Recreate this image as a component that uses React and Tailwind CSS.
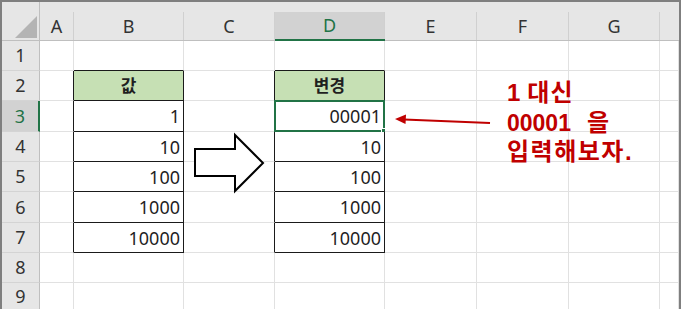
import React from 'react';

const cols = ['A', 'B', 'C', 'D', 'E', 'F', 'G', ''];
const rowNums = [1, 2, 3, 4, 5, 6, 7, 8, 9];

// values keyed by row for columns B and D
const bVals = { 2: '값', 3: '1', 4: '10', 5: '100', 6: '1000', 7: '10000' };
const dVals = { 2: '변경', 3: '00001', 4: '10', 5: '100', 6: '1000', 7: '10000' };

const inTable = (row) => row >= 2 && row <= 7;

const Cell = ({ col, row }) => {
  const isTableCol = col === 'B' || col === 'D';
  const isTable = isTableCol && inTable(row);
  const leftOfTable = (col === 'A' || col === 'C') && inTable(row);
  const aboveTable = isTableCol && row === 1;
  const isHead = isTable && row === 2;
  const selected = col === 'D' && row === 3;
  const value = col === 'B' ? bVals[row] : col === 'D' ? dVals[row] : null;

  const right = isTable || leftOfTable ? 'border-r-[#1a1a1a]' : 'border-r-[#e1e1e1]';
  const bottom = isTable || aboveTable ? 'border-b-[#1a1a1a]' : 'border-b-[#e1e1e1]';

  return (
    <div
      className={`relative border-r border-b ${right} ${bottom} ${
        isHead ? 'bg-[#c6e0b4] justify-center font-bold' : 'bg-white justify-end pr-[3px]'
      } flex items-center text-[18px] text-[#1f1f1f]`}
    >
      {value && <span className={isHead ? 'text-[17px] leading-none' : 'leading-none'}>{value}</span>}
      {selected && (
        <>
          <div className="absolute -left-[1px] -top-[1px] -right-[1px] -bottom-[1px] border-2 border-[#217346]" />
          <div className="absolute -right-[3px] -bottom-[3px] w-[6px] h-[6px] bg-[#217346] border border-white" />
        </>
      )}
    </div>
  );
};

export default function App() {
  return (
    <div
      className="relative w-[681px] h-[309px] bg-[#7f7f7f] p-[2px] overflow-hidden"
      style={{ fontFamily: '"Noto Sans", "Noto Sans CJK KR", sans-serif' }}
    >
      <div className="w-full h-full bg-white grid grid-cols-[38px_34px_110px_91px_110px_92px_92px_91px_1fr] grid-rows-[39px_30px_30px_31px_30px_30px_31px_30px_30px_1fr]">
        {/* corner */}
        <div className="bg-[#e6e6e6] border-r border-b border-[#bfbfbf] flex flex-col">
          <div className="h-[10px]" />
          <div className="flex-1 flex items-end justify-end pr-[2px] pb-[2px]">
            <svg width="22" height="22" viewBox="0 0 22 22">
              <polygon points="0,22 22,0 22,22" fill="#b4b4b4" />
            </svg>
          </div>
        </div>

        {/* column headers */}
        {cols.map((c, i) => {
          const sel = c === 'D';
          return (
            <div
              key={`h${i}`}
              className={`flex flex-col bg-[#e6e6e6] ${sel ? 'border-b-2 border-[#217346]' : 'border-b border-[#bfbfbf]'}`}
            >
              <div className="h-[10px]" />
              <div
                className={`flex-1 flex items-center justify-center text-[18px] ${
                  i < cols.length - 1 ? 'border-r border-[#d0d0d0]' : ''
                } ${sel ? 'bg-[#d2d2d2] text-[#217346]' : 'text-[#333333]'}`}
              >
                {c}
              </div>
            </div>
          );
        })}

        {/* rows */}
        {rowNums.map((r) => (
          <React.Fragment key={r}>
            <div
              className={`flex items-center justify-center text-[18px] border-b border-b-[#d4d4d4] ${
                r === 3
                  ? 'bg-[#d2d2d2] text-[#217346] border-r-2 border-r-[#217346]'
                  : 'bg-[#e6e6e6] text-[#333333] border-r border-r-[#bfbfbf]'
              }`}
            >
              {r}
            </div>
            {cols.map((c, i) => (
              <Cell key={`${r}-${i}`} col={c} row={r} />
            ))}
          </React.Fragment>
        ))}
      </div>

      {/* block arrow between the two tables */}
      <svg className="absolute left-0 top-0 pointer-events-none" width="681" height="309">
        <polygon
          points="195,149 235,149 235,135 263,163 235,191 235,176 195,176"
          fill="white"
          stroke="#000"
          strokeWidth="2"
          strokeLinejoin="miter"
        />
        <line x1="490" y1="123" x2="404" y2="119.5" stroke="#c00000" strokeWidth="2" />
        <polygon points="395,119 406,114.5 405.5,124" fill="#c00000" />
      </svg>

      {/* note */}
      <div
        className="absolute left-[507px] top-[78px] leading-[29.5px] font-bold text-[#c00000] text-[24px]"
        style={{ fontFamily: '"Liberation Sans", "Noto Sans CJK KR", sans-serif' }}
      >
        <div className="h-[29.5px] flex items-baseline">
          <span>1</span>
          <span className="ml-[7px] tracking-[1px]">대신</span>
        </div>
        <div className="h-[29.5px] flex items-baseline">
          <span className="text-[23px]">00001</span>
          <span className="ml-[16px]">을</span>
        </div>
        <div className="h-[29.5px] flex items-baseline">
          <span className="tracking-[1.5px]">입력해보자.</span>
        </div>
      </div>
    </div>
  );
}
